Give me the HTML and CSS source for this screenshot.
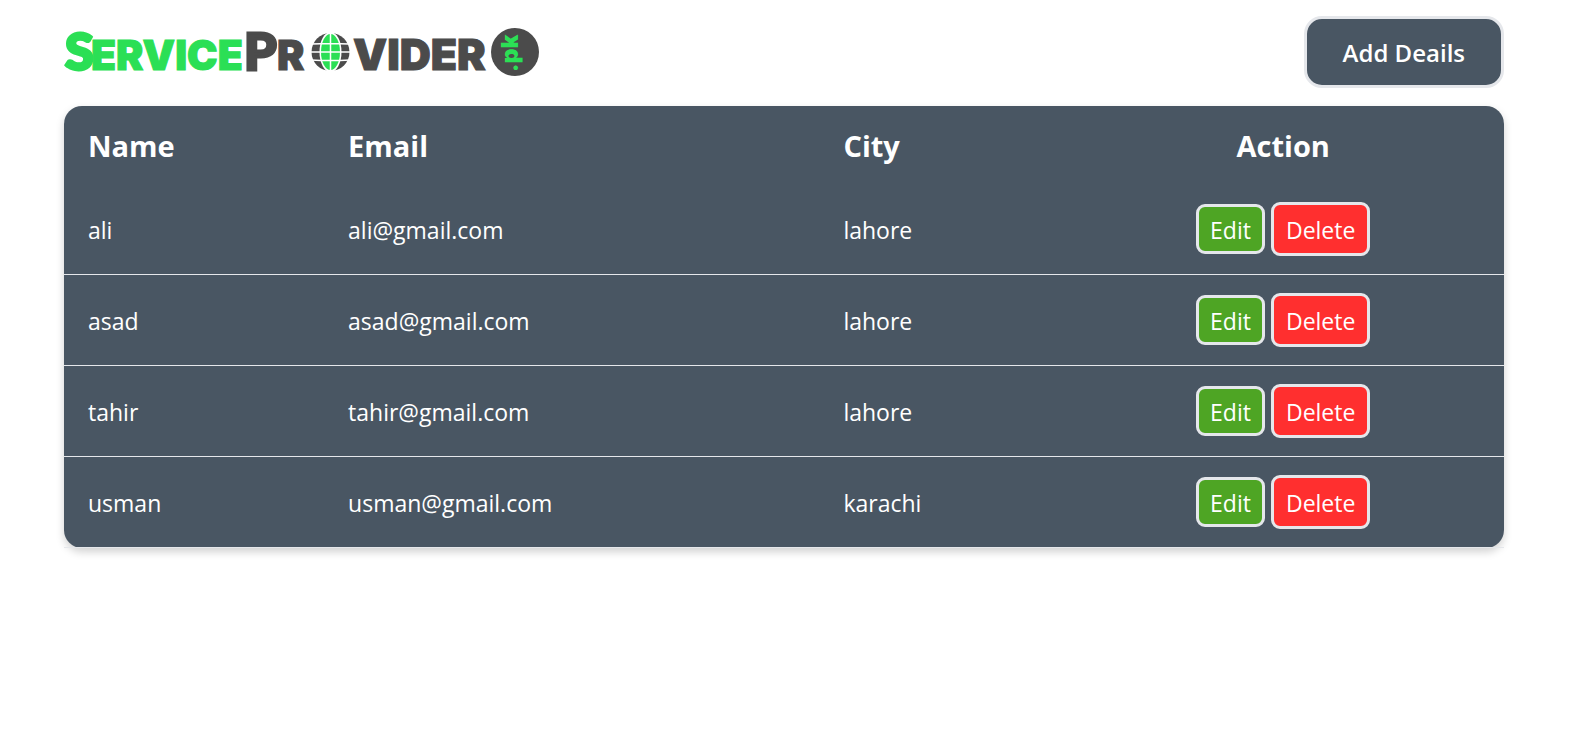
FILE: index.html
```html
<!DOCTYPE html>
<html lang="en">
<head>
<meta charset="utf-8">
<meta name="viewport" content="width=device-width, initial-scale=1">
<title>ServiceProvider.pk</title>
<link rel="stylesheet" href="styles.css">
</head>
<body>
<main class="page">
  <header class="topbar">
    <a class="brand" href="#" aria-label="ServiceProvider.pk">
      <svg class="logo" width="480" height="72" viewBox="0 0 480 72">
        <g class="logo-green">
          <text class="logo-big" x="1" y="54">S</text>
          <text class="logo-small" x="27" y="54">ERVICE</text>
        </g>
        <g class="logo-dark">
          <text class="logo-big" x="180" y="54">P</text>
          <text class="logo-small" x="213" y="54">R</text>
          <text class="logo-small logo-end" x="289" y="54">VIDER</text>
        </g>
        <circle cx="266.500" cy="36" r="19" fill="#4b4b4b"/>
        <ellipse cx="266.500" cy="36" rx="11" ry="20" fill="#fff"/>
        <ellipse cx="266.500" cy="36" rx="9.500" ry="18" fill="#2bdf55"/>
        <path fill="none" stroke="#fff" stroke-width="1.500" d="M266.500 16v40M246 36h41M247 28q19.500 -1 39 0M247 44q19.500 1 39 0"/>
        <circle cx="451" cy="36" r="24" fill="#4b4b4b"/>
        <text class="logo-tld" transform="translate(454 56) rotate(-90)">.pk</text>
      </svg>
    </a>
    <button class="add" type="button">Add Deails</button>
  </header>
  <div class="card">
    <table class="people">
      <colgroup><col class="c-name"><col class="c-email"><col class="c-city"><col></colgroup>
      <thead>
        <tr><th>Name</th><th>Email</th><th>City</th><th class="action">Action</th></tr>
      </thead>
      <tbody>
        <tr><td>ali</td><td>ali@gmail.com</td><td>lahore</td><td class="cell-actions"><div class="actions"><button class="btn edit" type="button">Edit</button><button class="btn delete" type="button">Delete</button></div></td></tr>
        <tr><td>asad</td><td>asad@gmail.com</td><td>lahore</td><td class="cell-actions"><div class="actions"><button class="btn edit" type="button">Edit</button><button class="btn delete" type="button">Delete</button></div></td></tr>
        <tr><td>tahir</td><td>tahir@gmail.com</td><td>lahore</td><td class="cell-actions"><div class="actions"><button class="btn edit" type="button">Edit</button><button class="btn delete" type="button">Delete</button></div></td></tr>
        <tr><td>usman</td><td>usman@gmail.com</td><td>karachi</td><td class="cell-actions"><div class="actions"><button class="btn edit" type="button">Edit</button><button class="btn delete" type="button">Delete</button></div></td></tr>
      </tbody>
    </table>
  </div>
</main>
</body>
</html>
```
FILE: styles.css
```css
* { box-sizing: border-box; }
body {
  margin: 0;
  background: #fff;
  color: #fff;
  font: 23px/36px "Segoe UI", "Open Sans", "Noto Sans", sans-serif;
}
button { font: inherit; color: inherit; cursor: pointer; border: 3px solid #e5e7eb; }
.page { padding: 16px 65px 24px 64px; }
.topbar { display: flex; justify-content: space-between; align-items: flex-start; margin-bottom: 18px; }
.logo { display: block; overflow: visible; font-weight: 900; }
.logo-green { fill: #2bdf55; stroke: #2bdf55; }
.logo-dark { fill: #4b4b4b; stroke: #4b4b4b; }
.logo-big { font-family: Lato, sans-serif; font-size: 52px; stroke-width: 3px; }
.logo-small { font-family: Inter, sans-serif; font-size: 41px; stroke-width: 1px; }
.logo-end { font-size: 43px; }
.logo-tld { font-family: Inter, sans-serif; font-size: 23px; fill: #2bdf55; }
.add { padding: 16px 36px 14px; border-radius: 18px; background: #495663; font-size: 24px; font-weight: 600; }
.card { border-radius: 18px; box-shadow: 0 4px 9px rgba(0, 0, 0, .18); }
.people { width: 100%; table-layout: fixed; border-spacing: 0; border-radius: 18px; background: #495663; }
.c-name { width: 18.06%; }
.c-email { width: 34.4%; }
.c-city { width: 16.88%; }
th { padding: 19px 24px 17px; font-size: 29px; line-height: 42px; font-weight: 700; text-align: left; }
th.action { text-align: center; }
td { padding: 20px 24px 18px; border-bottom: 1px solid #e5e7eb; }
td.cell-actions { padding: 18px 24px; }
.actions { display: flex; justify-content: center; align-items: center; gap: 6px; }
.btn { padding-left: 12px; padding-right: 12px; border-radius: 9px; }
.edit { padding: 5px 11px 3px; background: #4ea524; }
.delete { padding-top: 7px; padding-bottom: 5px; background: #ff2f2f; }
```
